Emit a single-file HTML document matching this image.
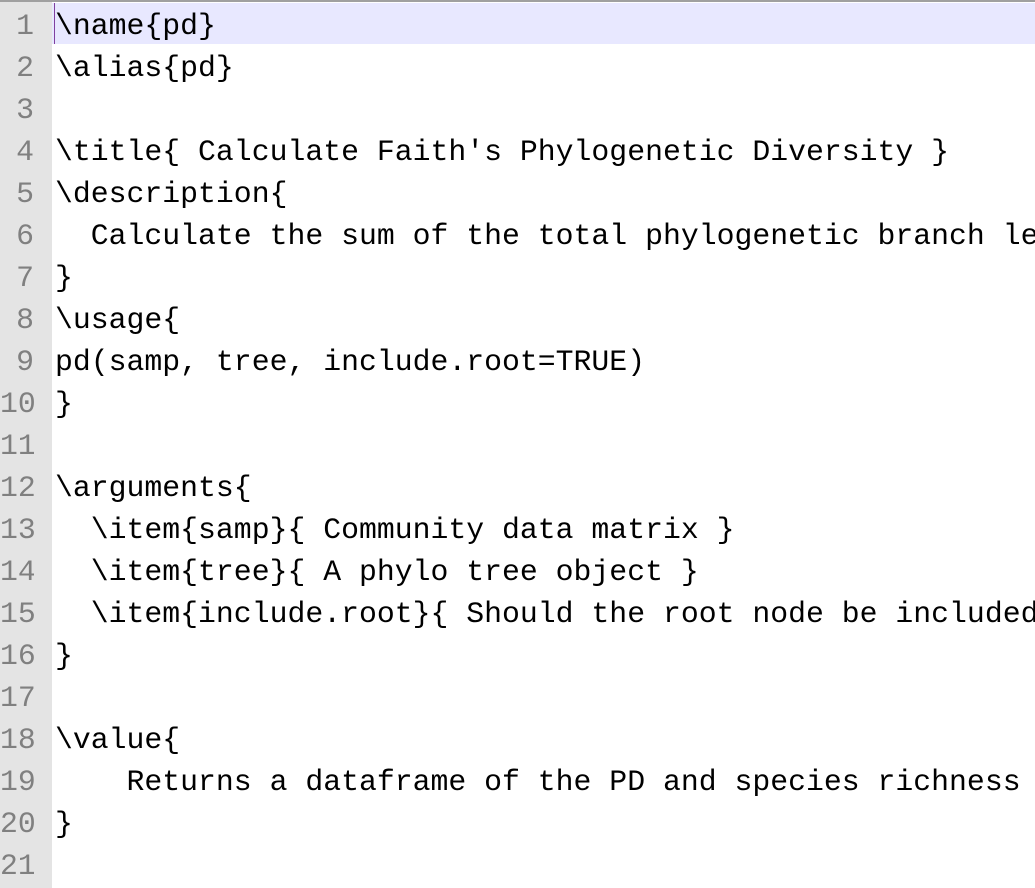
<!DOCTYPE html>
<html><head><style>
html,body{margin:0;padding:0;width:1035px;height:888px;overflow:hidden;background:#fff}
#w{position:absolute;left:0;top:0;width:1035px;height:888px;overflow:hidden}
.top{position:absolute;left:0;top:0;width:1035px;height:2px;background:#a0a0a0}
.gut{position:absolute;left:0;top:2px;width:52px;height:886px;background:#e4e4e4}
.hl{position:absolute;left:52px;top:3px;width:983px;height:41px;background:#e8e8ff}
.cur{position:absolute;left:54px;top:3px;width:1px;height:41px;background:#8040a0}
.l{position:absolute;left:0;height:42px;line-height:42px;font-family:"Liberation Mono",monospace;font-size:29.8px;white-space:pre;overflow:hidden}
.n{width:34px;text-align:right;color:#808080}
.t{left:55px;width:980px;color:#000}
</style></head><body><div id="w">
<div class="top"></div><div class="gut"></div><div class="hl"></div><div class="cur"></div>
<div class="l n" style="top:5px">1</div><div class="l t" style="top:5px">\name{pd}</div>
<div class="l n" style="top:47px">2</div><div class="l t" style="top:47px">\alias{pd}</div>
<div class="l n" style="top:89px">3</div>
<div class="l n" style="top:131px">4</div><div class="l t" style="top:131px">\title{ Calculate Faith's Phylogenetic Diversity }</div>
<div class="l n" style="top:173px">5</div><div class="l t" style="top:173px">\description{</div>
<div class="l n" style="top:215px">6</div><div class="l t" style="top:215px">  Calculate the sum of the total phylogenetic branch length</div>
<div class="l n" style="top:257px">7</div><div class="l t" style="top:257px">}</div>
<div class="l n" style="top:299px">8</div><div class="l t" style="top:299px">\usage{</div>
<div class="l n" style="top:341px">9</div><div class="l t" style="top:341px">pd(samp, tree, include.root=TRUE)</div>
<div class="l n" style="top:383px">10</div><div class="l t" style="top:383px">}</div>
<div class="l n" style="top:425px">11</div>
<div class="l n" style="top:467px">12</div><div class="l t" style="top:467px">\arguments{</div>
<div class="l n" style="top:509px">13</div><div class="l t" style="top:509px">  \item{samp}{ Community data matrix }</div>
<div class="l n" style="top:551px">14</div><div class="l t" style="top:551px">  \item{tree}{ A phylo tree object }</div>
<div class="l n" style="top:593px">15</div><div class="l t" style="top:593px">  \item{include.root}{ Should the root node be included</div>
<div class="l n" style="top:635px">16</div><div class="l t" style="top:635px">}</div>
<div class="l n" style="top:677px">17</div>
<div class="l n" style="top:719px">18</div><div class="l t" style="top:719px">\value{</div>
<div class="l n" style="top:761px">19</div><div class="l t" style="top:761px">    Returns a dataframe of the PD and species richness</div>
<div class="l n" style="top:803px">20</div><div class="l t" style="top:803px">}</div>
<div class="l n" style="top:845px">21</div>
</div></body></html>
